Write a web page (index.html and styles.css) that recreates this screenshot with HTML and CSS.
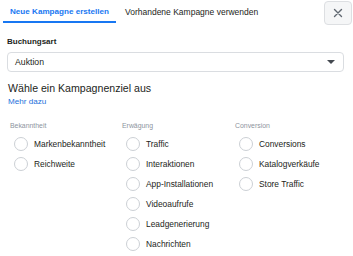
FILE: index.html
```html
<!DOCTYPE html>
<html lang="de">
<head>
<meta charset="utf-8">
<link rel="stylesheet" href="styles.css">
</head>
<body>
<div class="dialog">
  <div class="header">
    <div class="tabs">
      <div class="tab active">Neue Kampagne erstellen</div>
      <div class="tab">Vorhandene Kampagne verwenden</div>
    </div>
    <button class="close" aria-label="Schließen">
      <svg width="10" height="10" viewBox="0 0 10 10"><path d="M1.5 1.5L8.5 8.5M8.5 1.5L1.5 8.5" stroke="#606770" stroke-width="1.4" stroke-linecap="round"/></svg>
    </button>
  </div>
  <div class="field">
    <div class="label">Buchungsart</div>
    <div class="select">
      <span>Auktion</span>
      <span class="caret"></span>
    </div>
  </div>
  <div class="title">Wähle ein Kampagnenziel aus</div>
  <a class="link">Mehr dazu</a>
  <div class="columns">
    <div class="col">
      <div class="colhead">Bekanntheit</div>
      <div class="opt"><span class="radio"></span>Markenbekanntheit</div>
      <div class="opt"><span class="radio"></span>Reichweite</div>
    </div>
    <div class="col">
      <div class="colhead">Erwägung</div>
      <div class="opt"><span class="radio"></span>Traffic</div>
      <div class="opt"><span class="radio"></span>Interaktionen</div>
      <div class="opt"><span class="radio"></span>App-Installationen</div>
      <div class="opt"><span class="radio"></span>Videoaufrufe</div>
      <div class="opt"><span class="radio"></span>Leadgenerierung</div>
      <div class="opt"><span class="radio"></span>Nachrichten</div>
    </div>
    <div class="col">
      <div class="colhead">Conversion</div>
      <div class="opt"><span class="radio"></span>Conversions</div>
      <div class="opt"><span class="radio"></span>Katalogverkäufe</div>
      <div class="opt"><span class="radio"></span>Store Traffic</div>
    </div>
  </div>
</div>
</body>
</html>
```
FILE: styles.css
```css
* { box-sizing: border-box; }
html, body { margin: 0; padding: 0; background: #fff; }
body {
  font-family: "Liberation Sans", Arial, sans-serif;
  color: #1c1e21;
  width: 353px;
  height: 256px;
  overflow: hidden;
}
.dialog { padding: 0 9px 0 7px; }
.header {
  display: flex;
  justify-content: space-between;
  align-items: flex-start;
  height: 35px;
  margin-right: -8px;
}
.tabs { display: flex; margin-left: -4px; }
.tab {
  font-size: 8.5px;
  line-height: 12px;
  padding: 6px 7px 3px 7px;
  border-bottom: 2px solid transparent;
  height: 23px;
  color: #1c1e21;
}
.tab.active {
  color: #1877f2;
  font-weight: bold;
  font-size: 8.1px;
  border-bottom-color: #1877f2;
  margin-right: 2px;
}
.close {
  width: 28px;
  height: 24px;
  margin-top: 1px;
  background: #f5f6f7;
  border: 1px solid #dddfe2;
  border-radius: 4px;
  display: flex;
  align-items: center;
  justify-content: center;
  padding: 0;
}
.label {
  font-size: 8px;
  font-weight: bold;
  line-height: 12px;
  margin-top: 1px;
  margin-bottom: 4px;
}
.select {
  height: 20px;
  border: 1px solid #dadde1;
  border-radius: 4px;
  display: flex;
  align-items: center;
  justify-content: space-between;
  padding: 0 8px 0 7px;
  font-size: 8.7px;
}
.caret {
  width: 0;
  height: 0;
  border-left: 4px solid transparent;
  border-right: 4px solid transparent;
  border-top: 4px solid #444950;
}
.title {
  margin-top: 9px;
  font-size: 10.6px;
  line-height: 14px;
  margin-left: 1px;
}
.link {
  display: block;
  color: #216fdb;
  font-size: 8.1px;
  line-height: 13px;
  margin-left: 1px;
}
.columns {
  display: grid;
  grid-template-columns: 112px 113px 113px;
  margin-top: 13px;
  margin-left: 3px;
}
.colhead {
  font-size: 6.9px;
  color: #8d949e;
  line-height: 10px;
  margin-bottom: 3px;
}
.opt {
  display: flex;
  align-items: center;
  height: 20px;
  font-size: 8.4px;
  padding-left: 4px;
}
.radio {
  width: 14px;
  height: 14px;
  border: 1px solid #ccd0d5;
  border-radius: 50%;
  margin-right: 6px;
  flex: none;
}
```
